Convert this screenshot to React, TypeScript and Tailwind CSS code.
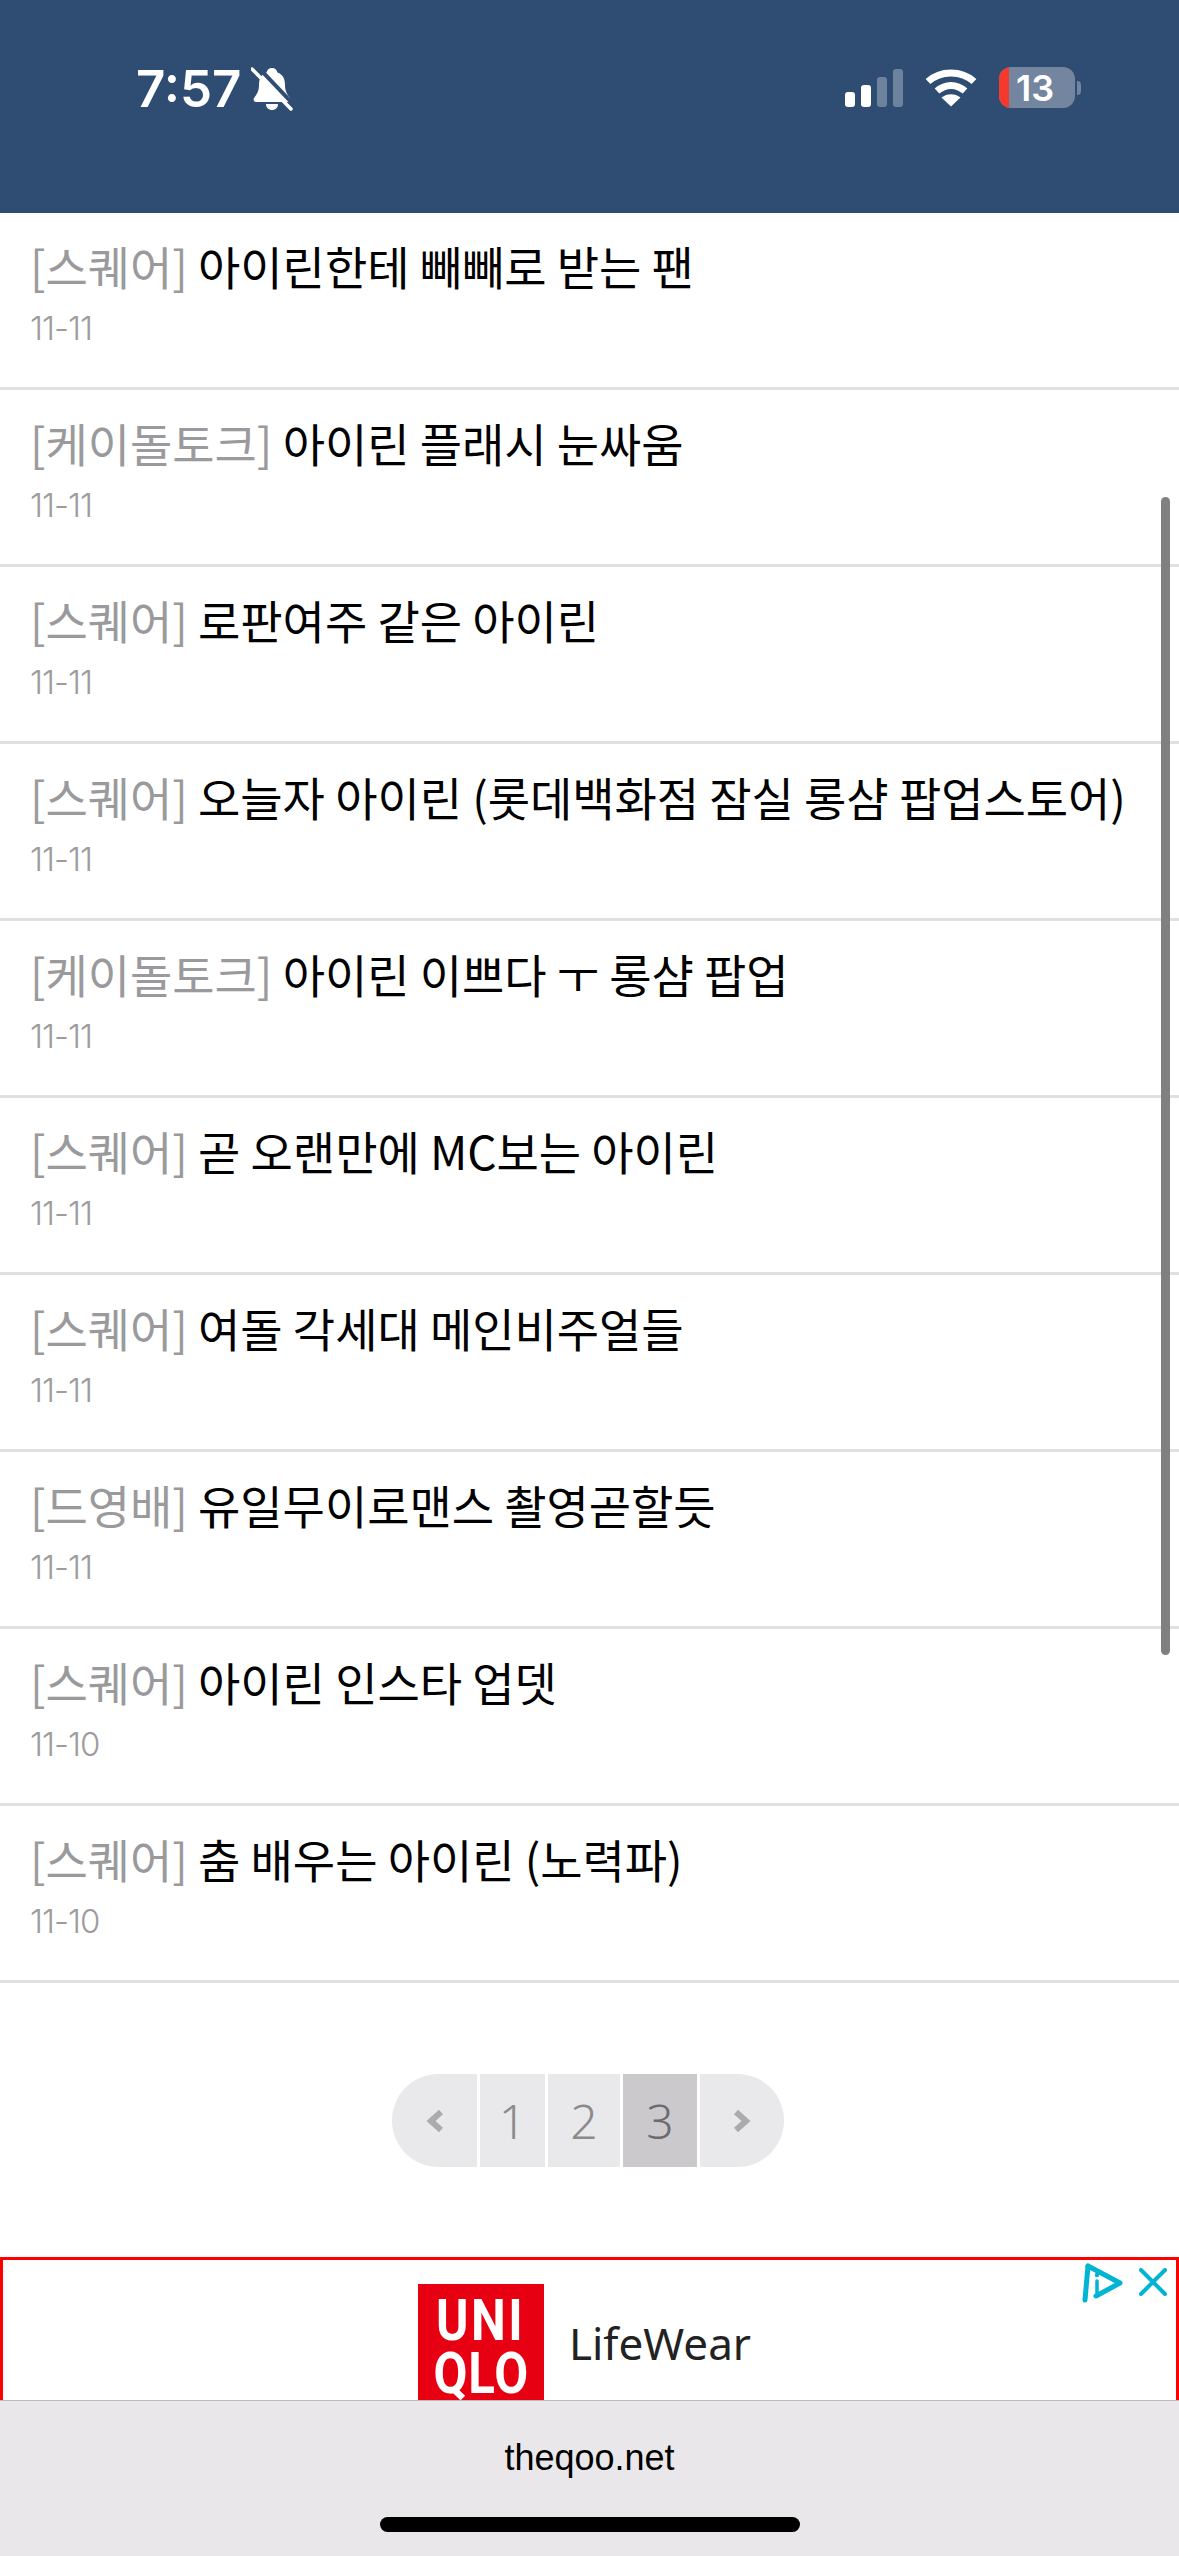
const posts = [
  { tag: "스퀘어", title: "아이린한테 빼빼로 받는 팬", date: "11-11" },
  { tag: "케이돌토크", title: "아이린 플래시 눈싸움", date: "11-11" },
  { tag: "스퀘어", title: "로판여주 같은 아이린", date: "11-11" },
  { tag: "스퀘어", title: "오늘자 아이린 (롯데백화점 잠실 롱샴 팝업스토어)", date: "11-11" },
  { tag: "케이돌토크", title: "아이린 이쁘다 ㅜ 롱샴 팝업", date: "11-11" },
  { tag: "스퀘어", title: "곧 오랜만에 MC보는 아이린", date: "11-11" },
  { tag: "스퀘어", title: "여돌 각세대 메인비주얼들", date: "11-11" },
  { tag: "드영배", title: "유일무이로맨스 촬영곧할듯", date: "11-11" },
  { tag: "스퀘어", title: "아이린 인스타 업뎃", date: "11-10" },
  { tag: "스퀘어", title: "춤 배우는 아이린 (노력파)", date: "11-10" },
];

function BellSlash() {
  return (
    <svg width="42" height="44" viewBox="0 0 42 44" className="ml-[10px]">
      <path
        d="M21 1c3 0 5 2 5.500 4.500C32 7.500 34 12 34 18c0 6 2 9 5 13 1 2 0 4-2 4H5c-2 0-3-2-2-4 3-4 5-7 5-13 0-6 2-10.500 7.500-12.500C16 3 18 1 21 1z"
        fill="#fff"
      />
      <path d="M15 37h12c0 3.500-2.500 6-6 6s-6-2.500-6-6z" fill="#fff" />
      <path d="M5 -2L45 40" stroke="#2f4d72" strokeWidth="4" />
      <path d="M1 2L40 42" stroke="#fff" strokeWidth="3.500" strokeLinecap="round" />
    </svg>
  );
}

function Signal() {
  return (
    <svg width="60" height="38" viewBox="0 0 60 38">
      <rect x="0" y="23" width="10" height="15" rx="3" fill="#fff" />
      <rect x="16" y="16" width="10" height="22" rx="3" fill="#fff" />
      <rect x="32" y="8" width="10" height="30" rx="3" fill="#fff" fillOpacity="0.3" />
      <rect x="48" y="0" width="10" height="38" rx="3" fill="#fff" fillOpacity="0.3" />
    </svg>
  );
}

function Wifi() {
  return (
    <svg width="52" height="38" viewBox="0 0 52 38" fill="none" stroke="#fff" strokeWidth="7">
      <path d="M3 12.500C15.500 1 36.500 1 49 12.500" />
      <path d="M12 22c8.500-7.500 19.500-7.500 28 0" />
      <path d="M26 37.500L16.500 28.500c5.500-4.500 13.500-4.500 19 0z" fill="#fff" stroke="none" />
    </svg>
  );
}

function AdChoice() {
  return (
    <svg width="42" height="40" viewBox="0 0 42 40" fill="none" stroke="#00b4d3" strokeWidth="5" strokeLinecap="round" strokeLinejoin="round">
      <path d="M6 3L38 20L14 33" />
      <path d="M6 3L3 37" />
      <path d="M15 18v12" strokeWidth="3.500" />
      <circle cx="15" cy="12" r="2.200" fill="#00b4d3" stroke="none" />
    </svg>
  );
}

function AdClose() {
  return (
    <svg width="28" height="28" viewBox="0 0 28 28" stroke="#00b4d3" strokeWidth="4" strokeLinecap="round">
      <path d="M2 2L26 26M26 2L2 26" />
    </svg>
  );
}

function Chevron({ dir }: { dir: "left" | "right" }) {
  return (
    <svg width="18" height="22" viewBox="0 0 18 22" fill="none" stroke="#ababab" strokeWidth="6">
      <path d={dir === "left" ? "M15 2L5 11L15 20" : "M3 2L13 11L3 20"} />
    </svg>
  );
}

export default function App() {
  return (
    <div className="relative flex h-[2556px] w-[1179px] flex-col overflow-hidden bg-white font-['Noto_Sans_CJK_KR','Noto_Sans',sans-serif]">
      {/* Status bar */}
      <header className="flex h-[213px] shrink-0 items-start justify-between bg-[#2f4d72] pl-[136px] pr-[98px] pt-[67px] text-white">
        <div className="flex items-center">
          <span className="font-['Inter',sans-serif] text-[51px] font-semibold leading-[42px]">7:57</span>
          <BellSlash />
        </div>
        <div className="flex items-center">
          <Signal />
          <div className="ml-[20px]">
            <Wifi />
          </div>
          <div className="ml-[22px] flex h-[41px] w-[76px] items-center overflow-hidden rounded-[12px] bg-[#74859f]">
            <div className="h-full w-[10px] shrink-0 bg-[#f5392c]" />
            <span className="ml-[7px] font-['Inter',sans-serif] text-[36px] font-semibold leading-none">13</span>
          </div>
          <div className="ml-[2px] h-[14px] w-[4px] rounded-r-full bg-[#74859f]" />
        </div>
      </header>

      {/* Post list */}
      <ul className="shrink-0">
        {posts.map((post, i) => (
          <li key={i} className="flex h-[177px] flex-col border-b-[3px] border-[#e0e0e0] px-[30px] pt-[22px]">
            <div className="whitespace-nowrap text-[46px] leading-[60px] tracking-[-0.05px] text-black">
              <span className="text-[#9a9a9c]">[{post.tag}]</span> {post.title}
            </div>
            <div className="mt-[13px] font-['Inter',sans-serif] text-[33px] font-light leading-[40px] tracking-[-1px] text-[#9c9c9e]">
              {post.date}
            </div>
          </li>
        ))}
      </ul>

      {/* Pagination */}
      <nav className="mt-[91px] flex h-[93px] shrink-0 justify-center gap-[3px] pr-[3px] font-['Noto_Sans',sans-serif] text-[48px] font-light text-[#8b8b8e]">
        <div className="flex w-[85px] items-center justify-center rounded-l-full bg-[#e9e8ea]">
          <Chevron dir="left" />
        </div>
        <div className="flex w-[65px] items-center justify-center bg-[#e9e8ea]">1</div>
        <div className="flex w-[72px] items-center justify-center bg-[#e9e8ea]">2</div>
        <div className="flex w-[74px] items-center justify-center bg-[#cbc9cc] text-[#6b6b6f]">3</div>
        <div className="flex w-[84px] items-center justify-center rounded-r-full bg-[#e9e8ea]">
          <Chevron dir="right" />
        </div>
      </nav>

      {/* Ad banner, cut off by the browser bar */}
      <section className="relative mt-[90px] min-h-0 flex-1 overflow-hidden border-x-[3px] border-t-[3px] border-[#ff0000] bg-white">
        <div className="flex justify-center pr-[10px] pt-[24px]">
          <div className="mr-[25px] flex h-[126px] w-[126px] shrink-0 flex-col items-center bg-[#e60012] pt-[10px] font-['Roboto',sans-serif] text-[58px] font-bold leading-[53px] text-white">
            <span className="scale-x-[0.85] tracking-[3px]">UNI</span>
            <span className="scale-x-[0.85] tracking-[1px]">QLO</span>
          </div>
          <span className="mt-[31px] font-['Noto_Sans',sans-serif] text-[44px] font-normal leading-[56px] text-[#222]">LifeWear</span>
        </div>
        <div className="absolute right-[52px] top-[3px]">
          <AdChoice />
        </div>
        <div className="absolute right-[9px] top-[8px]">
          <AdClose />
        </div>
      </section>

      {/* Browser bar */}
      <footer className="flex h-[156px] shrink-0 flex-col items-center border-t border-[#bcbcbe] bg-[#e9e7ea]">
        <span className="mt-[37px] font-['Liberation_Sans',sans-serif] text-[36px] leading-[40px] text-black">theqoo.net</span>
        <div className="mt-[39px] h-[15px] w-[420px] rounded-full bg-black" />
      </footer>

      {/* Scroll indicator */}
      <div className="absolute left-[1161px] top-[497px] h-[1158px] w-[9px] rounded-full bg-[#808080]" />
    </div>
  );
}
